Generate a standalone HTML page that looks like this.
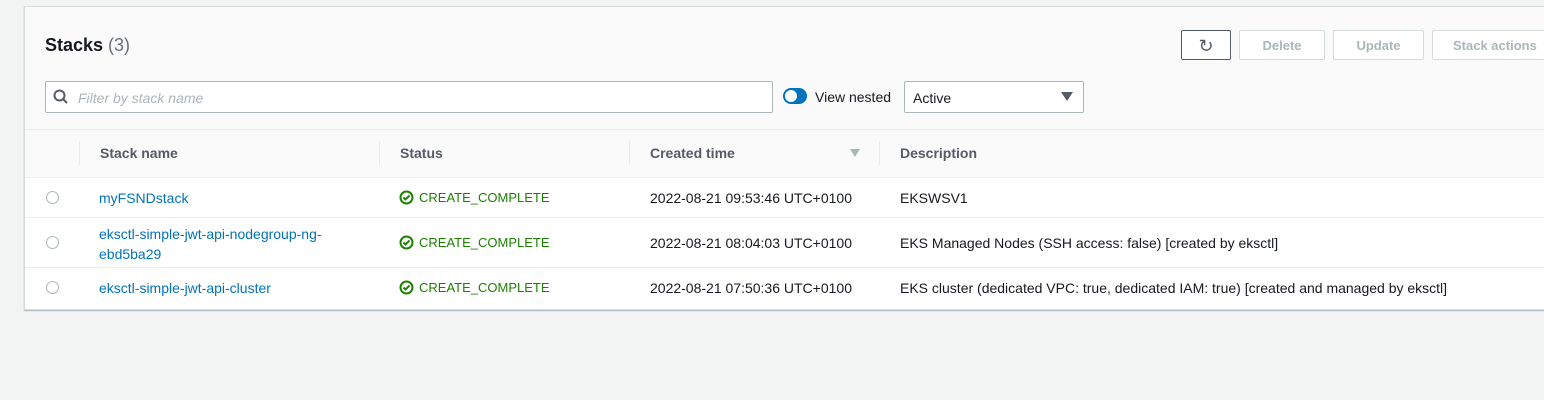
<!DOCTYPE html><html><head><style>
body{margin:0;width:1544px;height:400px;background:#f2f3f3;font-family:"Liberation Sans",sans-serif;font-size:14px;color:#16191f;position:relative;overflow:hidden}
.a{position:absolute;white-space:nowrap}
.panel{position:absolute;left:24px;top:6px;width:1530px;height:302px;background:#fff;border:1px solid #d5dbdb;box-shadow:0 1px 1px rgba(0,31,51,.3)}
.top{position:absolute;left:0;top:0;right:0;height:170px;background:#fafafa;border-bottom:1px solid #eaeded}
.btn{position:absolute;top:24px;height:30px;border:1px solid #d5dbdb;border-radius:2px;background:#fff;color:#aab7b8;font-weight:bold;text-align:center;line-height:30px;box-sizing:border-box;font-size:13px}
.hl{position:absolute;left:0;right:0;height:1px;background:#eaeded}
.sep{position:absolute;top:134px;width:1px;height:24px;background:#eaeded}
.th{font-weight:bold;color:#545b64}
.lnk{color:#0073bb}
.ok{color:#1d8102}
.rad{position:absolute;left:46px;width:11px;height:11px;border:1px solid #aab7b8;border-radius:50%}
</style></head><body>
<div class="panel"><div class="top"></div>
<div class="hl" style="top:122px"></div>
<div class="hl" style="top:170px"></div><div class="hl" style="top:210px"></div><div class="hl" style="top:260px"></div>
</div>
<div class="a" style="left:45px;top:35px;font-size:18px;font-weight:bold">Stacks <span style="font-weight:normal;color:#687078">(3)</span></div>
<div class="btn" style="left:1181px;top:30px;width:50px;border-color:#545b64;color:#545b64;font-size:18px;font-weight:normal">↻</div>
<div class="btn" style="left:1239px;top:30px;width:86px">Delete</div>
<div class="btn" style="left:1333px;top:30px;width:91px">Update</div>
<div class="btn" style="left:1432px;top:30px;width:130px;text-align:left;padding-left:20px">Stack actions</div>
<div class="a" style="left:45px;top:81px;width:726px;height:30px;border:1px solid #aab7b8;border-radius:2px;background:#fff"></div>
<svg class="a" style="left:53px;top:89px" width="16" height="16"><circle cx="6.5" cy="6.5" r="5" fill="none" stroke="#545b64" stroke-width="2"/><line x1="10" y1="10" x2="14" y2="14" stroke="#545b64" stroke-width="2"/></svg>
<div class="a" style="left:78px;top:90px;font-style:italic;color:#aab7b8">Filter by stack name</div>
<div class="a" style="left:783px;top:88px;width:24px;height:16px;border-radius:8px;background:#0073bb"></div>
<div class="a" style="left:785px;top:90px;width:12px;height:12px;border-radius:50%;background:#fff"></div>
<div class="a" style="left:815px;top:89px">View nested</div>
<div class="a" style="left:904px;top:81px;width:178px;height:30px;border:1px solid #aab7b8;border-radius:2px;background:#fff"></div>
<div class="a" style="left:913px;top:90px">Active</div>
<svg class="a" style="left:1061px;top:92px" width="12" height="10"><path d="M0 0h12L6 9z" fill="#545b64"/></svg>
<div class="sep" style="left:79px;top:141px"></div><div class="sep" style="left:379px;top:141px"></div><div class="sep" style="left:629px;top:141px"></div><div class="sep" style="left:879px;top:141px"></div>
<div class="a th" style="left:100px;top:145px">Stack name</div>
<div class="a th" style="left:400px;top:145px">Status</div>
<div class="a th" style="left:650px;top:145px">Created time</div>
<svg class="a" style="left:850px;top:149px" width="10" height="9"><path d="M0 0h10L5 8z" fill="#aab7b8"/></svg>
<div class="a th" style="left:900px;top:145px">Description</div>
<div class="rad" style="top:191px"></div><div class="rad" style="top:236px"></div><div class="rad" style="top:281px"></div>
<div class="a lnk" style="left:99px;top:190px">myFSNDstack</div>
<div class="a lnk" style="left:99px;top:224px;line-height:20px">eksctl-simple-jwt-api-nodegroup-ng-<br>ebd5ba29</div>
<div class="a lnk" style="left:99px;top:280px">eksctl-simple-jwt-api-cluster</div>
<svg class="a" style="left:399px;top:190px" width="15" height="15"><circle cx="7.5" cy="7.5" r="6" fill="none" stroke="#1d8102" stroke-width="2"/><path d="M4.5 7.5l2 2 4-4" fill="none" stroke="#1d8102" stroke-width="2"/></svg>
<svg class="a" style="left:399px;top:235px" width="15" height="15"><circle cx="7.5" cy="7.5" r="6" fill="none" stroke="#1d8102" stroke-width="2"/><path d="M4.5 7.5l2 2 4-4" fill="none" stroke="#1d8102" stroke-width="2"/></svg>
<svg class="a" style="left:399px;top:280px" width="15" height="15"><circle cx="7.5" cy="7.5" r="6" fill="none" stroke="#1d8102" stroke-width="2"/><path d="M4.5 7.5l2 2 4-4" fill="none" stroke="#1d8102" stroke-width="2"/></svg>
<div class="a ok" style="left:419px;top:190px;font-size:13px">CREATE_COMPLETE</div>
<div class="a ok" style="left:419px;top:235px;font-size:13px">CREATE_COMPLETE</div>
<div class="a ok" style="left:419px;top:280px;font-size:13px">CREATE_COMPLETE</div>
<div class="a" style="left:650px;top:190px">2022-08-21 09:53:46 UTC+0100</div>
<div class="a" style="left:650px;top:235px">2022-08-21 08:04:03 UTC+0100</div>
<div class="a" style="left:650px;top:280px">2022-08-21 07:50:36 UTC+0100</div>
<div class="a" style="left:900px;top:190px">EKSWSV1</div>
<div class="a" style="left:900px;top:235px">EKS Managed Nodes (SSH access: false) [created by eksctl]</div>
<div class="a" style="left:900px;top:280px">EKS cluster (dedicated VPC: true, dedicated IAM: true) [created and managed by eksctl]</div>
</body></html>
